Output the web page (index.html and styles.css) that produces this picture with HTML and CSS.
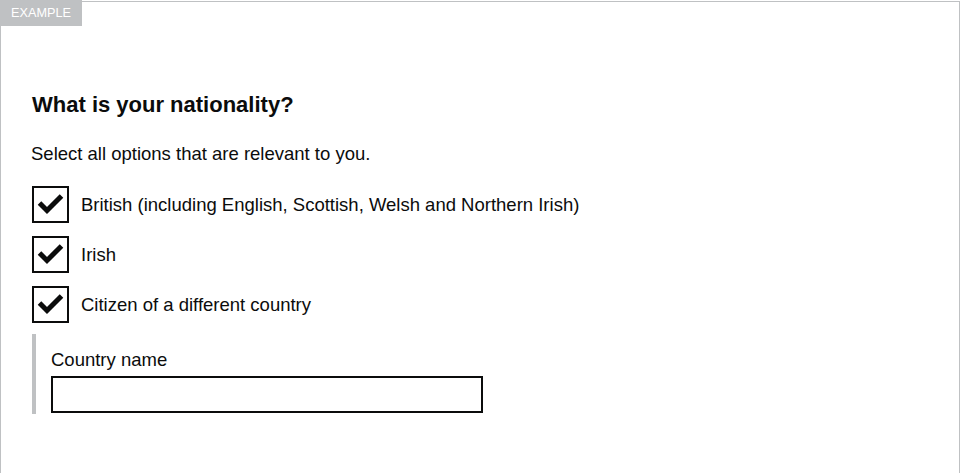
FILE: index.html
```html
<!DOCTYPE html>
<html lang="en">
<head>
<meta charset="utf-8">
<title>Checkboxes example</title>
<link rel="stylesheet" href="styles.css">
</head>
<body>
<div class="frame">
  <span class="tag">EXAMPLE</span>
  <div class="content">
    <h1 class="legend">What is your nationality?</h1>
    <p class="hint">Select all options that are relevant to you.</p>
    <div class="items">
      <div class="item">
        <span class="box"><svg width="37" height="37" viewBox="0 0 37 37"><polyline points="7.5,17 15,24.5 29.5,10" fill="none" stroke="#0b0c0c" stroke-width="5" stroke-linejoin="miter"/></svg></span>
        <span class="label">British (including English, Scottish, Welsh and Northern Irish)</span>
      </div>
      <div class="item">
        <span class="box"><svg width="37" height="37" viewBox="0 0 37 37"><polyline points="7.5,17 15,24.5 29.5,10" fill="none" stroke="#0b0c0c" stroke-width="5" stroke-linejoin="miter"/></svg></span>
        <span class="label">Irish</span>
      </div>
      <div class="item">
        <span class="box"><svg width="37" height="37" viewBox="0 0 37 37"><polyline points="7.5,17 15,24.5 29.5,10" fill="none" stroke="#0b0c0c" stroke-width="5" stroke-linejoin="miter"/></svg></span>
        <span class="label">Citizen of a different country</span>
      </div>
    </div>
    <div class="conditional">
      <label class="field-label">Country name</label>
      <div class="input"></div>
    </div>
  </div>
</div>
</body>
</html>
```

FILE: styles.css
```css
html, body {
  margin: 0;
  padding: 0;
  background: #fff;
}
body {
  font-family: "Liberation Sans", Arial, sans-serif;
  color: #0b0c0c;
}
.frame {
  position: relative;
  box-sizing: border-box;
  width: 960px;
  height: 472px;
  margin-top: 1px;
  border: 1px solid #bfc1c3;
  border-bottom: none;
}
.tag {
  position: absolute;
  left: -1px;
  top: -2px;
  width: 82px;
  height: 26px;
  background: #bfc1c3;
  color: #fff;
  font-size: 12.7px;
  line-height: 26px;
  text-align: center;
}
.content {
  padding: 90px 0 0 30px;
}
.legend {
  margin: 0;
  font-size: 22px;
  font-weight: 700;
  line-height: 26px;
  padding-left: 1px;
}
.hint {
  margin: 24px 0 0 0;
  font-size: 18.5px;
  line-height: 24px;
}
.items {
  margin-top: 20px;
  display: flex;
  flex-direction: column;
  gap: 13px;
}
.item {
  display: flex;
  align-items: center;
  height: 37px;
}
.box {
  box-sizing: border-box;
  width: 37px;
  height: 37px;
  border: 2px solid #0b0c0c;
  margin-left: 1px;
  position: relative;
  flex: none;
}
.box svg {
  position: absolute;
  left: -2px;
  top: -2px;
}
.label {
  margin-left: 12px;
  font-size: 18.5px;
  line-height: 24px;
}
.conditional {
  margin-top: 11px;
  margin-left: 1px;
  border-left: 4px solid #bfc1c3;
  padding: 14px 0 1px 15px;
  width: 432px;
}
.field-label {
  display: block;
  font-size: 18.5px;
  line-height: 24px;
  margin-bottom: 4px;
}
.input {
  box-sizing: border-box;
  width: 432px;
  height: 37px;
  border: 2px solid #0b0c0c;
}
```
